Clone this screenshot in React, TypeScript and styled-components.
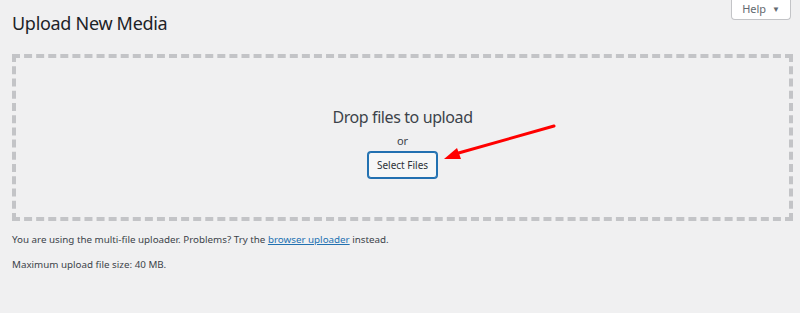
import * as React from 'react';
import styled, { createGlobalStyle } from 'styled-components';

const GlobalStyle = createGlobalStyle`
  html, body {
    margin: 0;
    padding: 0;
    background: #f0f0f1;
  }
  body {
    font-family: "Noto Sans", "Open Sans", sans-serif;
    color: #3c434a;
  }
`;

const App: React.FC = () => (
  <>
    <GlobalStyle />
    <Page>
      <Header>
        <Title>Upload New Media</Title>
        <HelpTab>
          Help <Caret>▼</Caret>
        </HelpTab>
      </Header>
      <DropZone>
        <DropTitle>Drop files to upload</DropTitle>
        <Or>or</Or>
        <SelectButton>Select Files</SelectButton>
        <Arrow width="115" height="42" viewBox="0 0 115 42">
          <line x1="111" y1="4" x2="12" y2="32" stroke="#f00" strokeWidth="3" strokeLinecap="round" />
          <polygon points="1,37 14,26 18,37" fill="#f00" />
        </Arrow>
      </DropZone>
      <Note>
        You are using the multi-file uploader. Problems? Try the <Link href="#">browser uploader</Link> instead.
      </Note>
      <Note>Maximum upload file size: 40 MB.</Note>
    </Page>
  </>
);

const Page = styled.div`
  height: 313px;
  box-sizing: border-box;
  padding: 0 7px 0 12px;
`;

const Header = styled.div`
  display: flex;
  justify-content: space-between;
  align-items: flex-start;
  height: 54px;
`;

const Title = styled.h1`
  margin: 12px 0 0;
  font-size: 18px;
  letter-spacing: -0.3px;
  font-weight: 400;
  line-height: 22px;
  color: #1d2327;
`;

const HelpTab = styled.div`
  width: 60px;
  height: 20px;
  box-sizing: border-box;
  margin-right: 2px;
  border: 1px solid #c3c4c7;
  border-top: none;
  border-radius: 0 0 4px 4px;
  background: #fff;
  font-size: 11px;
  line-height: 18px;
  color: #646970;
  text-align: center;
`;

const Caret = styled.span`
  font-size: 8px;
  vertical-align: 1px;
  margin-left: 3px;
`;

const DropZone = styled.div`
  position: relative;
  height: 167px;
  box-sizing: border-box;
  border: 4px dashed #c3c4c7;
  display: flex;
  flex-direction: column;
  align-items: center;
  padding-top: 48px;
`;

const DropTitle = styled.div`
  font-size: 16px;
  letter-spacing: -0.4px;
  line-height: 22px;
  color: #3c434a;
`;

const Or = styled.div`
  font-size: 11px;
  line-height: 14px;
  margin-top: 6px;
`;

const SelectButton = styled.button`
  margin-top: 4px;
  height: 26px;
  padding: 0 8px;
  border: 1px solid #2271b1;
  border-radius: 3px;
  background: #f6f7f7;
  box-shadow: 0 0 0 1px #2271b1;
  font-family: "Noto Sans", "Open Sans", sans-serif;
  font-size: 10px;
  color: #2c3338;
`;

const Arrow = styled.svg`
  position: absolute;
  left: 427px;
  top: 64px;
`;

const Note = styled.p`
  margin: 0;
  padding-top: 12px;
  font-size: 9.8px;
  line-height: 13px;
  color: #3c434a;
`;

const Link = styled.a`
  color: #2271b1;
`;

export default App;
